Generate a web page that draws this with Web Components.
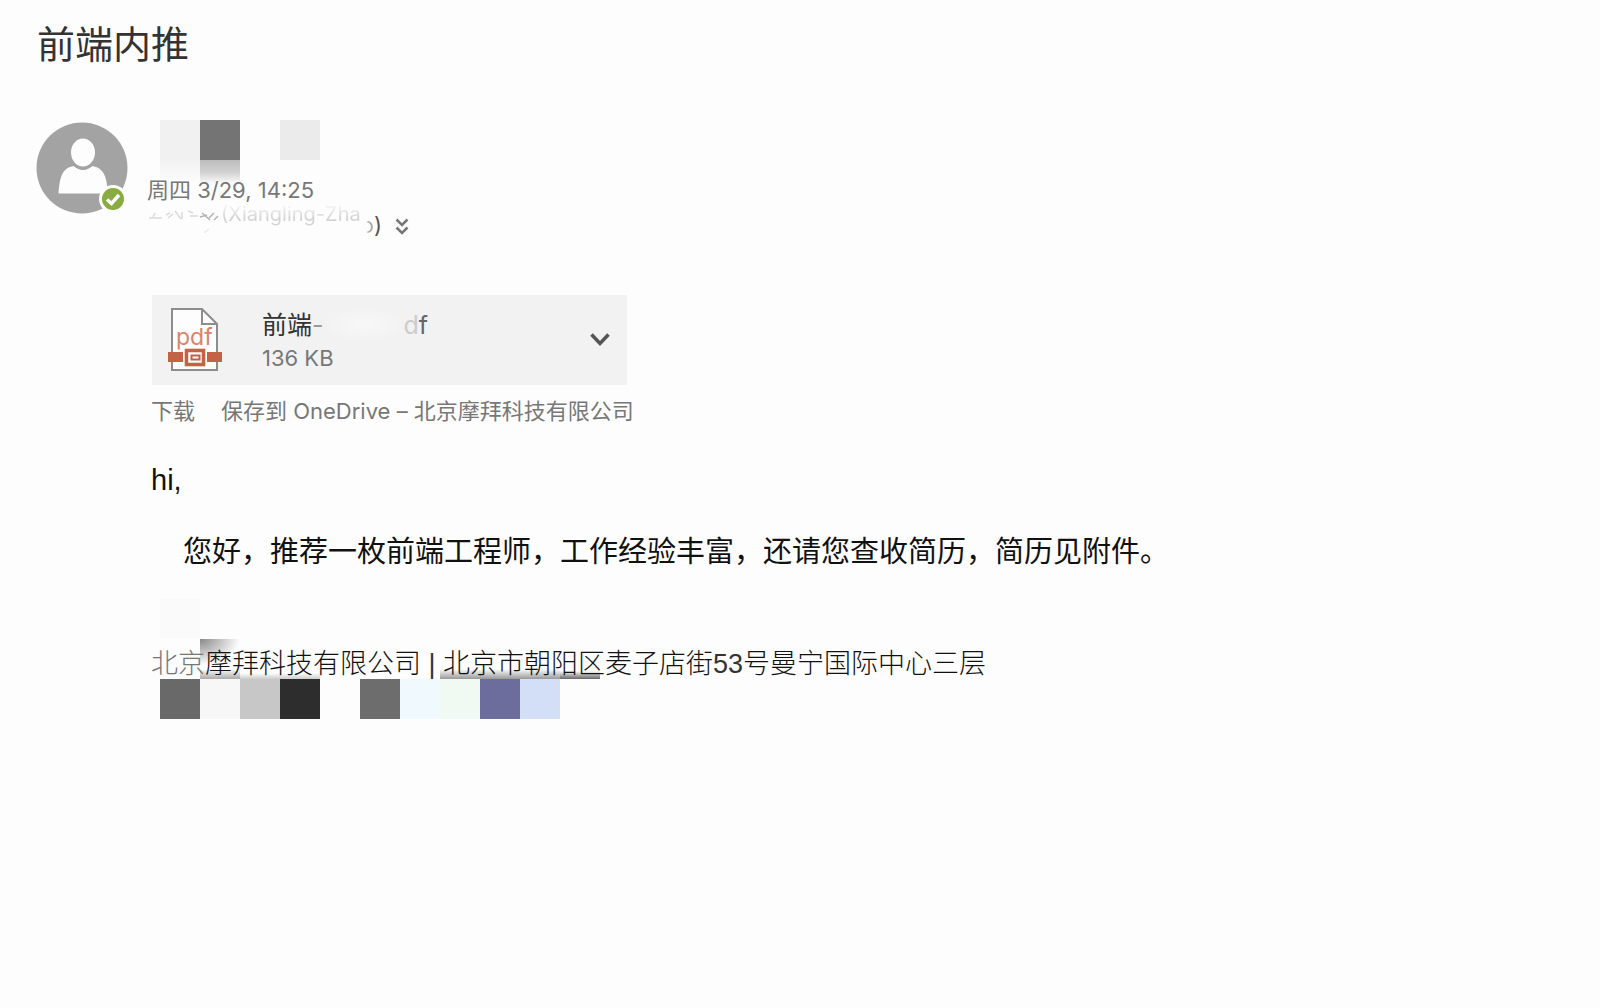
<!DOCTYPE html>
<html lang="zh-CN">
<head>
<meta charset="utf-8">
<title>前端内推</title>
<style>
html{background:#fdfdfd}
body{margin:0;font-family:Inter,"Noto Sans CJK SC",sans-serif;color:#333}
</style>
</head>
<body>
<mail-page>
  <span slot="subject">前端内推</span>
  <mail-header slot="header"></mail-header>
  <mail-attachment slot="body"></mail-attachment>
  <mail-message slot="body">
    <p slot="greeting">hi,</p>
    <span slot="text">您好，推荐一枚前端工程师，工作经验丰富，还请您查收简历，简历见附件。</span>
  </mail-message>
  <mail-signature slot="body"></mail-signature>
</mail-page>
<script>
function define(name, html) {
  const t = document.createElement('template');
  t.innerHTML = html;
  customElements.define(name, class extends HTMLElement {
    constructor() {
      super();
      this.attachShadow({mode: 'open'}).append(t.content.cloneNode(true));
    }
  });
}

define('mail-page', `
<style>
:host{display:block;padding:20px 36px}
h1{margin:0 0 52px;padding-left:1px;font-size:38px;line-height:48px;font-weight:400;color:#333}
.body{padding-left:115px}
</style>
<h1><slot name="subject"></slot></h1>
<slot name="header"></slot>
<div class="body"><slot name="body"></slot></div>`);

define('user-avatar', `
<style>:host{display:block;width:92px;height:92px}svg{display:block}</style>
<svg width="92" height="92" viewBox="0 0 92 92" role="img" aria-label="头像">
  <circle cx="46" cy="46" r="45.500" fill="#a3a3a3"/>
  <path d="M22.500 71.500C23.500 56 26 45.500 38 44Q47 52 56 44C68 45.500 71.500 56 71.500 71.500Z" fill="#fdfdfd"/>
  <ellipse cx="47" cy="30.500" rx="13.500" ry="15.500" fill="#fdfdfd" stroke="#a3a3a3" stroke-width="3"/>
  <circle cx="77" cy="77" r="14" fill="#fdfdfd"/>
  <circle cx="77" cy="77" r="11" fill="#8aab40"/>
  <path d="M71 77.500l4.500 4 7.500-8.500" fill="none" stroke="#fff" stroke-width="3.500"/>
</svg>`);

define('pixel-block', `
<style>:host{display:block;flex:none;width:40px;height:40px;background:var(--c,transparent)}</style>`);

define('mail-header', `
<style>
:host{display:flex;gap:19px;height:175px}
user-avatar{margin-top:2px}
.name{display:flex;height:58px;padding-left:13px}
.col{width:40px}
.fade{height:24px}
.date{position:relative;font-size:22px;line-height:24px;color:#777;white-space:nowrap}
.to{display:flex;height:38px;align-items:flex-start}
.ghost{font-size:20px;line-height:24px;color:#d4d4d4;white-space:nowrap;
  -webkit-mask-image:linear-gradient(#0004 5px,#000 16px);mask-image:linear-gradient(#0004 5px,#000 16px)}
.tail{font-size:22px;line-height:26px;padding-top:10px;color:#555;display:flex}
.tail i{font-style:normal;color:transparent;background:linear-gradient(90deg,#fdfdfd 40%,#aaa 60%);-webkit-background-clip:text;background-clip:text}
button{border:0;background:none;padding:0;margin:15px 0 0 13px}
svg{display:block}
</style>
<user-avatar></user-avatar>
<div>
  <div class="name">
    <div class="col"><pixel-block style="--c:#f1f1f1"></pixel-block><div class="fade" style="background:linear-gradient(#f1f1f1,#fdfdfd)"></div></div>
    <div class="col"><pixel-block style="--c:#747474"></pixel-block><div class="fade" style="background:linear-gradient(#bdbdbd,#d0d0d0 50%,#fdfdfd)"></div></div>
    <div class="col"></div>
    <div class="col"><pixel-block style="--c:#ebebeb"></pixel-block></div>
  </div>
  <div class="date">周四 3/29, 14:25</div>
  <div class="to">
    <svg width="74" height="34" viewBox="0 0 74 34" fill="none" stroke="#ccc" stroke-width="1.500">
      <path d="M2 16h13M8 11l-2 4M19 13l4-2M21 16l5-4M28 9l6 8M35 10v7M41 9l5 2M43 14h8" opacity=".7"/>
      <path d="M53 15l7-2M55 11l8 7M62 16l5-5M67 18l4-4" stroke="#b3b3b3"/>
      <path d="M57 31l5-4" opacity=".4"/>
    </svg>
    <span class="ghost">(Xiangling-Zha</span>
    <span class="tail"><i>o</i>)</span>
    <button aria-label="展开收件人"><svg width="14" height="20" viewBox="0 0 14 20" fill="none" stroke="#777" stroke-width="2.500"><path d="M1.500 2.500L7 8l5.500-5.500M1.500 10.500L7 16l5.500-5.500"/></svg></button>
  </div>
</div>`);

define('pdf-icon', `
<style>:host{display:block}svg{display:block}text{font:23px Inter,sans-serif}</style>
<svg width="56" height="66" viewBox="0 0 56 66">
  <path d="M5 2h30l15 15v46H5z" fill="#fdfdfd" stroke="#8d8d8d" stroke-width="2"/>
  <path d="M35 2v15h15" fill="none" stroke="#8d8d8d" stroke-width="2"/>
  <text x="9" y="38" fill="#d9836b">pdf</text>
  <path d="M17 41h22v19H17z" fill="#f8f5f3"/>
  <path d="M1 45h15v10H1zM40 45h15v10H40z" fill="#c46245"/>
  <path d="M19.500 43.500h17v14h-17z" fill="#fdfdfd" stroke="#c46245" stroke-width="3.500"/>
  <path d="M24.500 48.500h8v4h-8z" fill="none" stroke="#c46245" stroke-width="2"/>
</svg>`);

define('mail-attachment', `
<style>
:host{display:block}
.card{display:flex;align-items:center;box-sizing:border-box;width:476px;height:90px;padding:0 17px 0 15px;background:#f2f2f2;border-left:1px solid #fdfdfd}
.info{flex:1;padding-left:39px}
.file{display:flex;font-size:25px;line-height:36px;color:#333}
.file i{font-style:normal;width:80px;height:36px;background:radial-gradient(closest-side,#f8f8f8,#f2f2f2)}
.file .d{color:#ccc}.file .f{color:#666}
.file .dash{color:#999}
.size{font-size:22px;line-height:30px;color:#777}
button{border:0;background:none;padding:0}
svg{display:block}
nav{display:flex;gap:26px;padding-top:11px;font-size:22px;line-height:30px;white-space:nowrap}
a{color:#777;text-decoration:none}
</style>
<div class="card">
  <pdf-icon></pdf-icon>
  <div class="info">
    <div class="file"><span>前端</span><span class="dash">-</span><i></i><span class="d">d</span><span class="f">f</span></div>
    <div class="size">136 KB</div>
  </div>
  <button aria-label="更多操作"><svg width="20" height="16" viewBox="0 0 20 16" fill="none" stroke="#555" stroke-width="3.500"><path d="M1.500 2.500L10 11.500l8.500-9"/></svg></button>
</div>
<nav><a href="#">下载</a><a href="#">保存到 OneDrive – 北京摩拜科技有限公司</a></nav>`);

define('mail-message', `
<style>
:host{display:block;padding-top:36px;font:29px/36px "Liberation Sans","Noto Sans CJK SC",sans-serif;color:#111}
::slotted(p){margin:0}
.text{margin:36px 0 0;padding-left:32px}
</style>
<slot name="greeting"></slot>
<p class="text"><slot name="text"></slot></p>`);

define('mail-signature', `
<style>
:host{display:block;padding-top:29px}
.row{display:flex;height:40px}
.shade{background:
  radial-gradient(ellipse 40px 26px at 0 0,#888,#fdfdfd00) 49px 0/40px 26px no-repeat,
  linear-gradient(#fdfdfd00,#aaa) 49px 30px/40px 10px no-repeat,
  linear-gradient(#fdfdfd00,#ccc) 89px 34px/80px 6px no-repeat,
  linear-gradient(#fdfdfd00,#999) 289px 30px/120px 10px no-repeat,
  linear-gradient(#fdfdfd00,#666) 409px 32px/40px 8px no-repeat;
  font:300 27px/46px "Noto Sans CJK SC",sans-serif;color:#111;white-space:nowrap}
.pale{color:#777}
.latin{font:400 27px/46px "Liberation Sans",sans-serif;color:#333}
.pixels{padding-left:9px}
</style>
<div class="row pixels"><pixel-block style="--c:#fafafa"></pixel-block></div>
<div class="row shade"><div><span class="pale">北京</span>摩拜科技有限公司<span class="latin"> | </span>北京市朝阳区麦子店街<span class="latin">53</span>号曼宁国际中心三层</div></div>
<div class="row pixels">
  <pixel-block style="--c:#696969"></pixel-block><pixel-block style="--c:#f7f7f7"></pixel-block><pixel-block style="--c:#c7c7c7"></pixel-block><pixel-block style="--c:#2d2d2d"></pixel-block><pixel-block></pixel-block><pixel-block style="--c:#6d6d6d"></pixel-block><pixel-block style="--c:#f0f9fd"></pixel-block><pixel-block style="--c:#f0f9f2"></pixel-block><pixel-block style="--c:#6c6d9c"></pixel-block><pixel-block style="--c:#d3dff6"></pixel-block>
</div>`);
</script>
</body>
</html>
